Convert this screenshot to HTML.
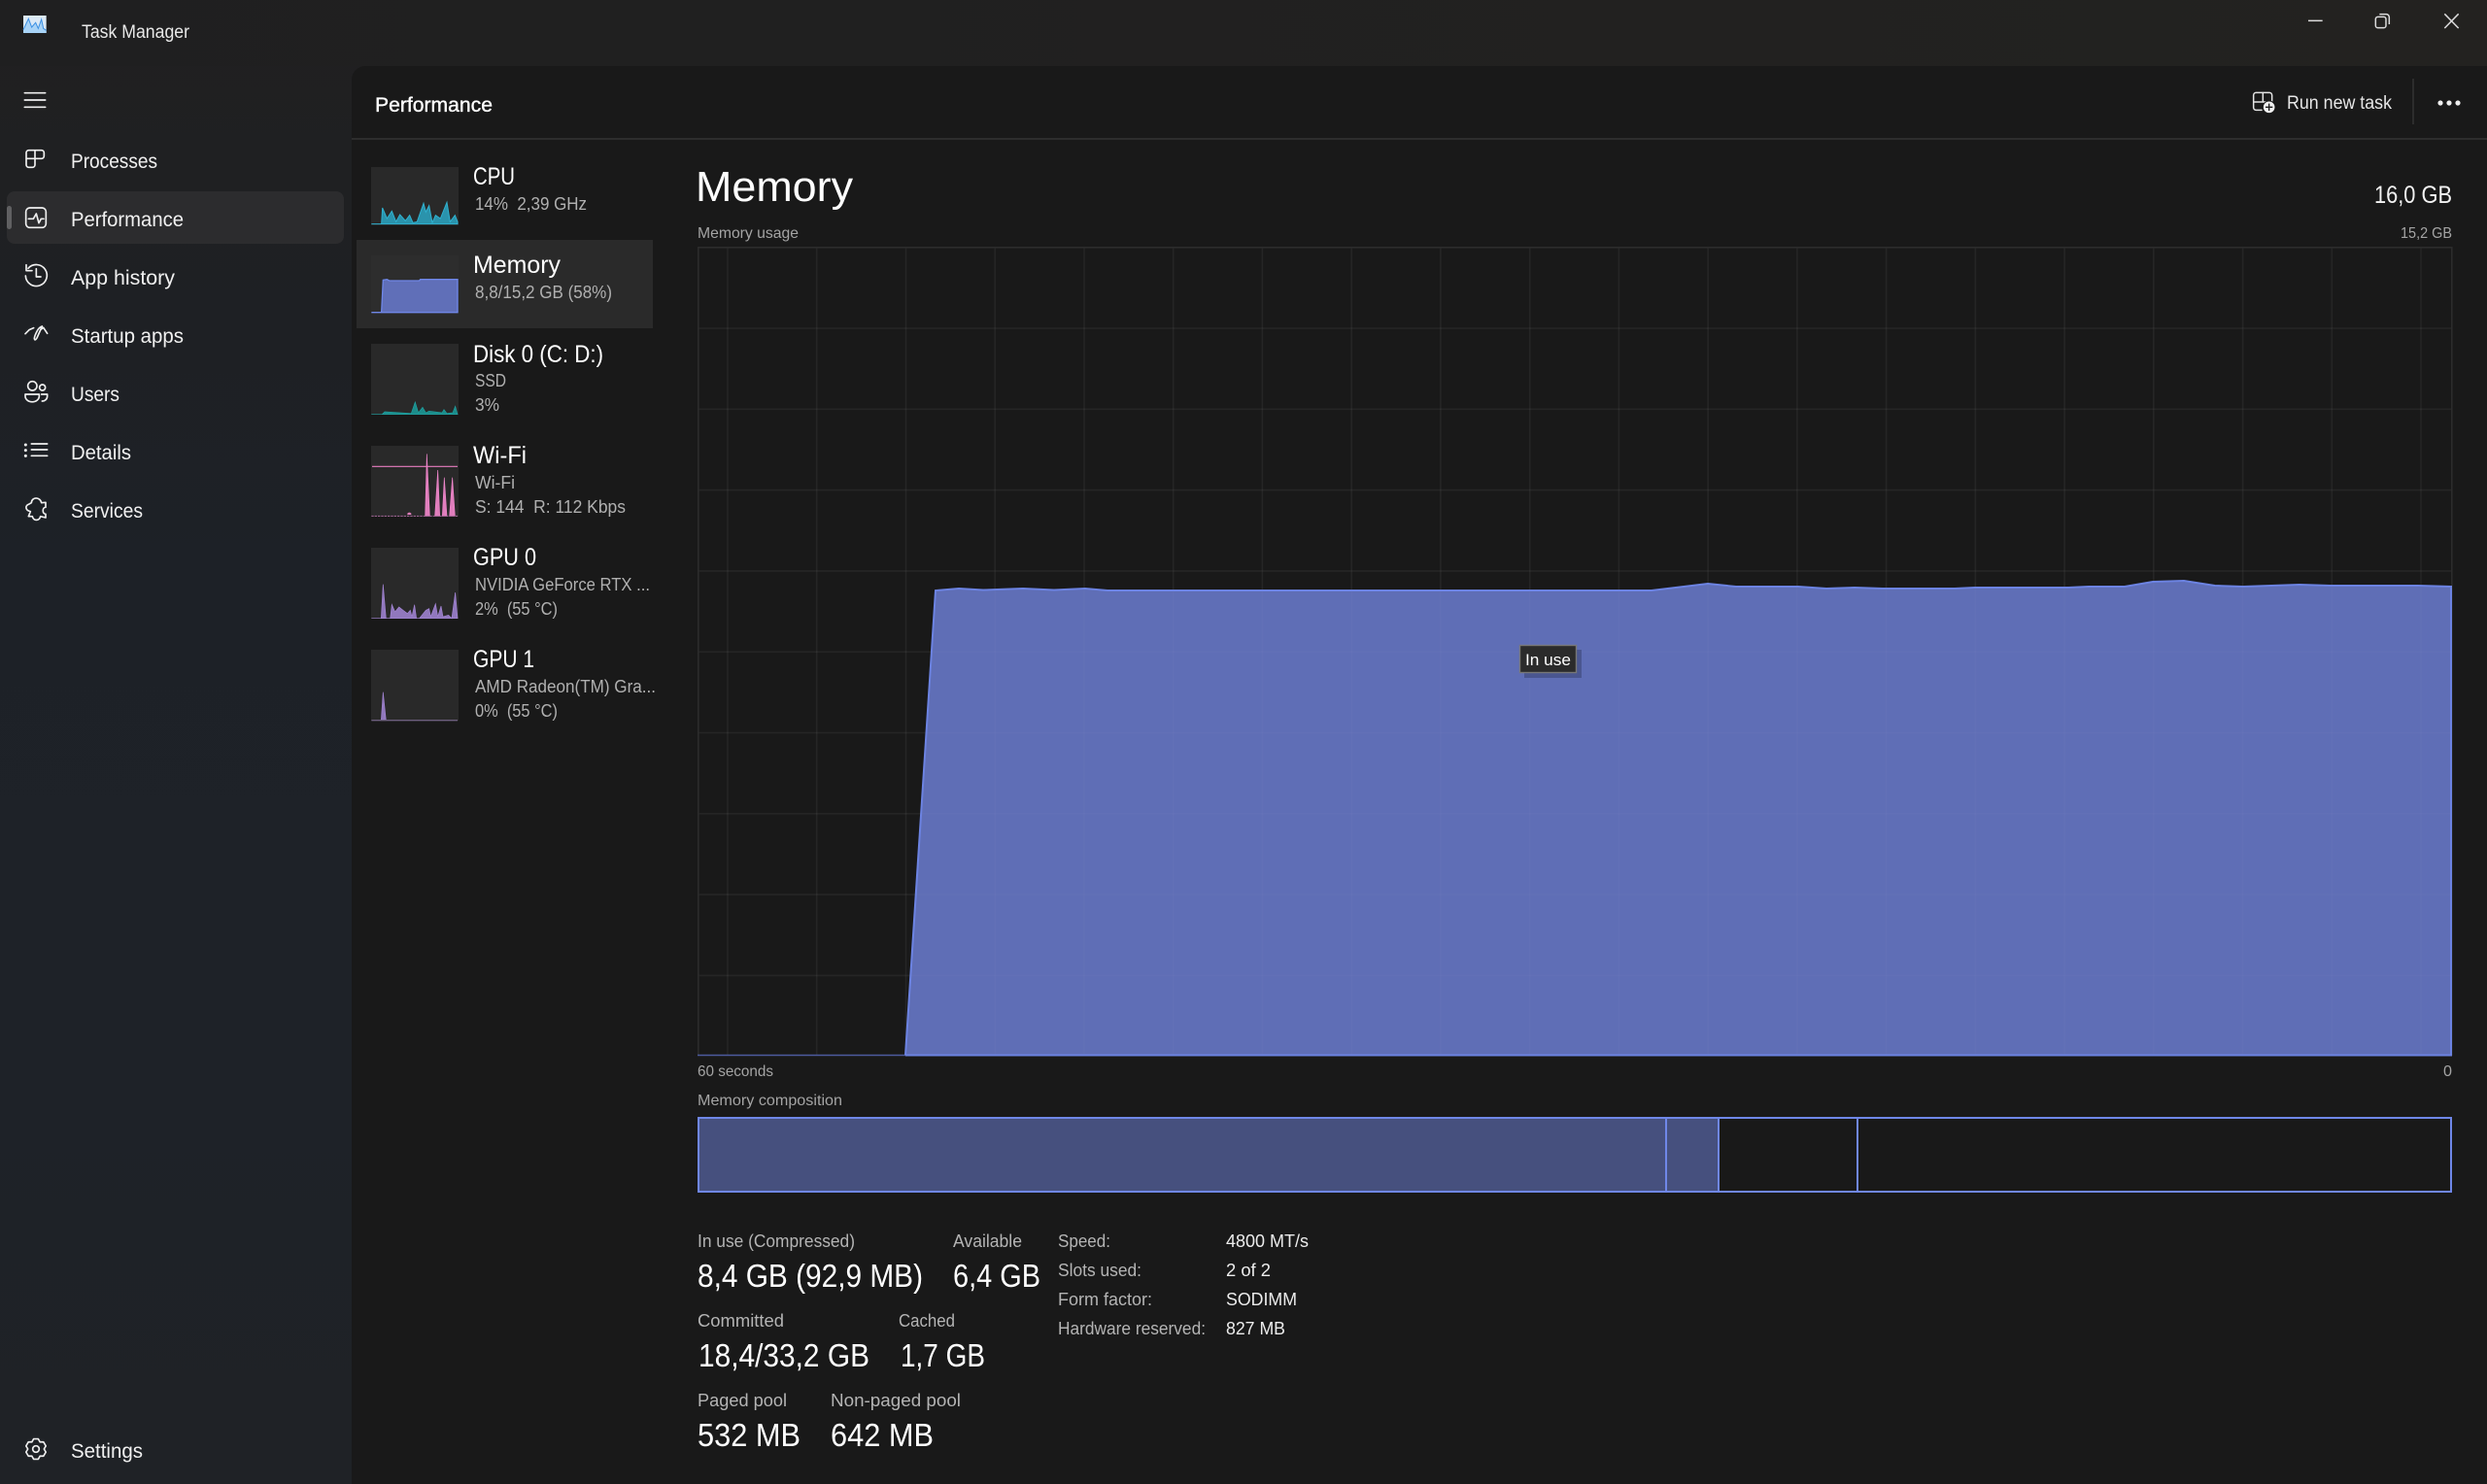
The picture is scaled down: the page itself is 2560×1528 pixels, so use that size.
<!DOCTYPE html>
<html lang="en"><head><meta charset="utf-8"><title>Task Manager</title>
<style>
html,body{margin:0;padding:0;background:#191919;width:2560px;height:1528px;overflow:hidden}
svg{display:block}
text{font-family:"Liberation Sans",sans-serif;white-space:pre}
.nav{font-size:21px;fill:#f0f0f0}
.title{font-size:25px;fill:#fff}
.sub{font-size:18px;fill:#b0b0b0}
.lab{font-size:18px;fill:#b4b4b4}
.val{font-size:33px;fill:#fff}
.sm{font-size:16px;fill:#a4a4a4}
.rv{font-size:18px;fill:#ececec}
.ic{fill:none;stroke:#efefef;stroke-width:5;stroke-linecap:round;stroke-linejoin:round}
</style></head>
<body>
<svg xmlns="http://www.w3.org/2000/svg" width="2560" height="1528" viewBox="0 0 2560 1528">
<defs>
<linearGradient id="side" x1="0" y1="0" x2="0" y2="1">
<stop offset="0" stop-color="#201f20"/><stop offset=".12" stop-color="#1f2022"/><stop offset=".38" stop-color="#1d2127"/><stop offset=".7" stop-color="#1e2228"/><stop offset="1" stop-color="#1f2226"/>
</linearGradient>
<linearGradient id="tb" x1="0" y1="0" x2="1" y2="0">
<stop offset="0" stop-color="#1f1f20"/><stop offset="1" stop-color="#232220"/>
</linearGradient>
</defs>

<rect width="2560" height="1528" fill="url(#side)"/>
<rect width="2560" height="68" fill="url(#tb)"/>
<rect x="362" y="68" width="2240" height="1500" rx="14" fill="#191919"/>
<rect x="362" y="142" width="2198" height="2" fill="#2d2d2d"/>

<!-- Title bar -->
<g transform="scale(.33333)">
<rect x="72" y="48" width="71" height="54" fill="#dbe9f6"/>
<path d="M72 92 L88 58 L98 84 L110 70 L118 88 L128 60 L134 88 L143 94 V102 H72Z" fill="#a8d3f7"/>
<path d="M72 92 L88 58 L98 84 L110 70 L118 88 L128 60 L134 88 L143 94" fill="none" stroke="#3a90e4" stroke-width="3"/>
</g>
<text x="84" y="39" font-size="19" fill="#e8e8e8" textLength="111" lengthAdjust="spacingAndGlyphs">Task Manager</text>

<g transform="translate(2260,0) scale(.33333)" fill="none" stroke="#dcdcdc" stroke-width="4.5">
<path d="M348 64 H392"/>
<rect x="556" y="52" width="32" height="34" rx="7"/>
<path d="M568 44 H589 a9 9 0 0 1 9 9 V75"/>
<path d="M769 43 L812 87 M812 43 L769 87"/>
</g>

<!-- Sidebar -->
<rect x="7" y="197" width="347" height="54" rx="8" fill="#2c2c2e"/>
<rect x="7" y="212" width="5" height="24" rx="2.5" fill="#606062"/>

<g transform="scale(.33333)">
<path class="ic" d="M76 287 H140 M76 309 H140 M76 331 H140"/>
<path class="ic" d="M108 490 V464 H128 a8 8 0 0 1 8 8 V482 a8 8 0 0 1 -8 8 H81 V472 a8 8 0 0 1 8-8 H108 M81 490 V509 a8 8 0 0 0 8 8 H100 a8 8 0 0 0 8-8 V490"/>
<rect class="ic" x="80" y="642" width="62" height="61" rx="12"/>
<path class="ic" d="M88 676 H103 L112 660 L120 689 L127 676 H135"/>
<path class="ic" d="M87 829 A33 33 0 1 1 79 852 M81 818 V836 H99 M112 830 V855 H126"/>
</g>
<g transform="translate(0,280) scale(.33333)">
<path class="ic" d="M78 191 L90 179 L104 173 M130 168 L114 204 Q108 214 106 206 Q106 198 116 180 Q122 170 130 168 M134 172 L146 190 M134 172 L126 178"/>
<circle class="ic" cx="100" cy="352" r="14"/>
<circle class="ic" cx="131" cy="357" r="9"/>
<path class="ic" d="M78 378 H121 V384 a21 17 0 0 1 -43 0 Z M128 378 H146 V384 a15 15 0 0 1 -16 15"/>
<path class="ic" d="M97 531 H146 M97 549 H146 M97 568 H146"/>
<path d="M79 534 h.1 M79 551 h.1 M79 568 h.1" stroke="#efefef" stroke-width="9" stroke-linecap="round" fill="none"/>
<path class="ic" d="M97 713 C98 694 124 694 128 713 L141 712 V727 C130 727 130 747 141 748 V759 L125 755 C121 770 103 770 100 755 L88 755 L94 740 C78 736 76 722 90 717 Z"/>
</g>
<g transform="translate(37,1492) scale(.33333)">
<path class="ic" d="M-7.2 -31.2 L7.2 -31.2 L12.5 -21.7 L23.4 -21.8 L30.6 -9.4 L25 0 L30.6 9.4 L23.4 21.8 L12.5 21.7 L7.2 31.2 L-7.2 31.2 L-12.5 21.7 L-23.4 21.8 L-30.6 9.4 L-25 0 L-30.6 -9.4 L-23.4 -21.8 L-12.5 -21.7Z"/>
<circle class="ic" cx="0" cy="0" r="10"/>
</g>

<text class="nav" x="73" y="173" textLength="89" lengthAdjust="spacingAndGlyphs">Processes</text>
<text class="nav" x="73" y="233" textLength="116" lengthAdjust="spacingAndGlyphs">Performance</text>
<text class="nav" x="73" y="293" textLength="107" lengthAdjust="spacingAndGlyphs">App history</text>
<text class="nav" x="73" y="353" textLength="116" lengthAdjust="spacingAndGlyphs">Startup apps</text>
<text class="nav" x="73" y="413" textLength="50" lengthAdjust="spacingAndGlyphs">Users</text>
<text class="nav" x="73" y="473" textLength="62" lengthAdjust="spacingAndGlyphs">Details</text>
<text class="nav" x="73" y="533" textLength="74" lengthAdjust="spacingAndGlyphs">Services</text>
<text class="nav" x="73" y="1501" textLength="74" lengthAdjust="spacingAndGlyphs">Settings</text>

<!-- Header -->
<text x="386" y="115" font-size="21" fill="#fff" stroke="#fff" stroke-width=".35" textLength="121" lengthAdjust="spacingAndGlyphs">Performance</text>
<g transform="translate(2260,0) scale(.33333)" fill="none" stroke="#e4e4e4" stroke-width="4.5" stroke-linejoin="round">
<path d="M208 315 V286 H228 a8 8 0 0 1 8 8 V315 H179 V294 a8 8 0 0 1 8-8 H208 M179 315 V332 a8 8 0 0 0 8 8 H206"/>
<circle cx="227" cy="331" r="19" fill="#f2f2f2" stroke="#191919" stroke-width="3"/>
<path d="M216 331 H238 M227 320 V342" stroke="#191919" stroke-width="4"/>
</g>
<text x="2354" y="112" font-size="19" fill="#e6e6e6" textLength="108" lengthAdjust="spacingAndGlyphs">Run new task</text>
<rect x="2483" y="81" width="2" height="47" fill="#2d2d2d"/>
<circle cx="2512" cy="106" r="2.6" fill="#eee"/><circle cx="2521" cy="106" r="2.6" fill="#eee"/><circle cx="2530" cy="106" r="2.6" fill="#eee"/>

<!-- Left list -->
<rect x="367" y="247" width="305" height="91" fill="#2a2a2a"/>
<rect x="382" y="172" width="90" height="60" fill="#292929"/>
<rect x="382" y="263" width="90" height="60" fill="#2d2d2d"/>
<rect x="382" y="354" width="90" height="73" fill="#292929"/>
<rect x="382" y="459" width="90" height="73" fill="#292929"/>
<rect x="382" y="564" width="90" height="73" fill="#292929"/>
<rect x="382" y="669" width="90" height="73" fill="#292929"/>

<g transform="translate(360,140) scale(.33333)">
<path d="M67 272 H98 L101 222 L115 255 L130 232 L143 265 L155 243 L172 262 L185 245 L195 268 L208 265 L228 208 L235 235 L245 215 L255 268 L265 245 L280 255 L300 205 L310 265 L325 245 L333 265 V272Z" fill="#2a93ac" stroke="#2fb1cf" stroke-width="3"/>
<path d="M67 545 H98 L103 445 L115 443 L122 447 H215 L218 443 H333 V545Z" fill="#606fb8" stroke="#6f87e8" stroke-width="4"/>
<path d="M67 860 H100 L108 852 L190 857 L202 822 L212 855 L225 838 L235 855 L245 850 L285 855 L291 845 L300 857 L318 855 L326 835 L333 860Z" fill="#1c8c8a" stroke="#1fa3a3" stroke-width="2"/>
</g>
<g transform="translate(360,440) scale(.33333)">
<path d="M69 121 H333" stroke="#e87cc0" stroke-width="3.5" fill="none"/>
<path d="M233 274 L238 82 L247 274Z M263 274 L272 132 L278 274Z M286 274 L292 155 L300 274Z M308 274 L317 155 L325 274Z" fill="#e07ebc" stroke="#ee86cb" stroke-width="2"/>
<path d="M178 266 Q184 260 190 266 V270 H178Z" fill="#e07ebc"/>
<path d="M67 274 H333" stroke="#a5679a" stroke-width="3" stroke-dasharray="7 3" fill="none"/>
<path d="M67 590 H97 L103 485 L112 590 H125 L130 547 L140 570 L152 555 L165 565 L178 575 L187 565 L192 585 L200 548 L206 590 H215 L235 565 L245 560 L250 585 L265 545 L272 585 L282 552 L288 585 L305 580 L315 590 L326 510 L333 590Z" fill="#9178bd" stroke="#a485d5" stroke-width="2"/>
<path d="M97 905 L103 818 L112 905Z" fill="#9178bd" stroke="#a485d5" stroke-width="2"/>
<path d="M67 905 H333" stroke="#6c5f7e" stroke-width="4" fill="none"/>
</g>

<text class="title" x="487" y="190" textLength="43" lengthAdjust="spacingAndGlyphs">CPU</text>
<text class="sub" x="489" y="216" textLength="115" lengthAdjust="spacingAndGlyphs">14%  2,39 GHz</text>
<text class="title" x="487" y="281" textLength="90" lengthAdjust="spacingAndGlyphs">Memory</text>
<text class="sub" x="489" y="307" textLength="141" lengthAdjust="spacingAndGlyphs">8,8/15,2 GB (58%)</text>
<text class="title" x="487" y="373" textLength="134" lengthAdjust="spacingAndGlyphs">Disk 0 (C: D:)</text>
<text class="sub" x="489" y="398" textLength="32" lengthAdjust="spacingAndGlyphs">SSD</text>
<text class="sub" x="489" y="423" textLength="25" lengthAdjust="spacingAndGlyphs">3%</text>
<text class="title" x="487" y="477" textLength="55" lengthAdjust="spacingAndGlyphs">Wi-Fi</text>
<text class="sub" x="489" y="503" textLength="41" lengthAdjust="spacingAndGlyphs">Wi-Fi</text>
<text class="sub" x="489" y="528" textLength="155" lengthAdjust="spacingAndGlyphs">S: 144  R: 112 Kbps</text>
<text class="title" x="487" y="582" textLength="65" lengthAdjust="spacingAndGlyphs">GPU 0</text>
<text class="sub" x="489" y="608" textLength="180" lengthAdjust="spacingAndGlyphs">NVIDIA GeForce RTX ...</text>
<text class="sub" x="489" y="633" textLength="85" lengthAdjust="spacingAndGlyphs">2%  (55 °C)</text>
<text class="title" x="487" y="687" textLength="63" lengthAdjust="spacingAndGlyphs">GPU 1</text>
<text class="sub" x="489" y="713" textLength="186" lengthAdjust="spacingAndGlyphs">AMD Radeon(TM) Gra...</text>
<text class="sub" x="489" y="738" textLength="85" lengthAdjust="spacingAndGlyphs">0%  (55 °C)</text>

<!-- Main heading -->
<text x="716" y="207" font-size="44" fill="#fff" textLength="162" lengthAdjust="spacingAndGlyphs">Memory</text>
<text class="sm" x="718" y="245" textLength="104" lengthAdjust="spacingAndGlyphs">Memory usage</text>
<text x="2444" y="209" font-size="25" fill="#f2f2f2" textLength="80" lengthAdjust="spacingAndGlyphs">16,0 GB</text>
<text class="sm" x="2471" y="245" textLength="53" lengthAdjust="spacingAndGlyphs">15,2 GB</text>

<!-- Chart grid on dark -->
<g stroke="#fff" stroke-opacity=".055" stroke-width="1.6" fill="none">
<path d="M749 254V1087M840.7 254V1087M932.5 254V1087M1024.2 254V1087M1116 254V1087M1207.7 254V1087M1299.4 254V1087M1391.2 254V1087M1482.9 254V1087M1574.7 254V1087M1666.4 254V1087M1758.1 254V1087M1849.9 254V1087M1941.6 254V1087M2033.4 254V1087M2125.1 254V1087M2216.8 254V1087M2308.6 254V1087M2400.3 254V1087M2492 254V1087"/>
<path d="M718 338H2524M718 421.3H2524M718 504.6H2524M718 587.9H2524M718 671.2H2524M718 754.5H2524M718 837.8H2524M718 921.1H2524M718 1004.4H2524"/>
</g>
<path d="M718.8 1087V254.8H2523.8V1087" fill="none" stroke="#2c2c2c" stroke-width="1.6"/>

<!-- Area -->
<path d="M932 1087 L963 608 L987 606 L1012 607.5 L1053 606 L1085 607.5 L1117 606 L1140 608 L1700 608 L1758 601 L1787 604 L1851 604 L1880 606 L1909 605 L1938 606 L2012 606 L2033 605 L2129 605 L2150 604 L2187 604 L2216 599 L2248 598 L2280 603 L2309 604 L2367 602 L2399 603 L2489 603 L2523 604 V1087Z" fill="#5f6eb6"/>
<clipPath id="ac"><path d="M932 1087 L963 608 L1700 608 L1758 601 L2248 598 L2523 604 V1087Z"/></clipPath>
<g clip-path="url(#ac)" stroke="#fff" stroke-opacity=".02" stroke-width="1.6" fill="none">
<path d="M1024.2 254V1087M1116 254V1087M1207.7 254V1087M1299.4 254V1087M1391.2 254V1087M1482.9 254V1087M1574.7 254V1087M1666.4 254V1087M1758.1 254V1087M1849.9 254V1087M1941.6 254V1087M2033.4 254V1087M2125.1 254V1087M2216.8 254V1087M2308.6 254V1087M2400.3 254V1087M2492 254V1087"/>
<path d="M718 671.2H2524M718 754.5H2524M718 837.8H2524M718 921.1H2524M718 1004.4H2524"/>
</g>
<path d="M718 1086.5 H932" fill="none" stroke="#4d5a9e" stroke-width="1.6"/>
<path d="M932 1086.5 L963 608 L987 606 L1012 607.5 L1053 606 L1085 607.5 L1117 606 L1140 608 L1700 608 L1758 601 L1787 604 L1851 604 L1880 606 L1909 605 L1938 606 L2012 606 L2033 605 L2129 605 L2150 604 L2187 604 L2216 599 L2248 598 L2280 603 L2309 604 L2367 602 L2399 603 L2489 603 L2523 604 V1086.5 H932" fill="none" stroke="#6c83e2" stroke-width="2"/>

<!-- Tooltip -->
<rect x="1569" y="669" width="59" height="29" fill="#4a5690"/>
<rect x="1564.5" y="664.5" width="58" height="28" fill="#2b2b2b" stroke="#777" stroke-width="1.4"/>
<text x="1570" y="685" font-size="17" fill="#fff" textLength="47" lengthAdjust="spacingAndGlyphs">In use</text>

<text class="sm" x="718" y="1108" textLength="78" lengthAdjust="spacingAndGlyphs">60 seconds</text>
<text class="sm" x="2515" y="1108" textLength="9" lengthAdjust="spacingAndGlyphs">0</text>
<text class="sm" x="718" y="1138" textLength="149" lengthAdjust="spacingAndGlyphs">Memory composition</text>

<!-- Composition bar -->
<rect x="719" y="1151" width="1050" height="76" fill="#46507e"/>
<rect x="719" y="1151" width="1804" height="76" fill="none" stroke="#6f87e8" stroke-width="2"/>
<path d="M1715 1150V1228M1769 1150V1228M1912 1150V1228" stroke="#6f87e8" stroke-width="2" fill="none"/>

<!-- Stats -->
<text class="lab" x="718" y="1284" textLength="162" lengthAdjust="spacingAndGlyphs">In use (Compressed)</text>
<text class="val" x="718" y="1325" textLength="232" lengthAdjust="spacingAndGlyphs">8,4 GB (92,9 MB)</text>
<text class="lab" x="981" y="1284" textLength="71" lengthAdjust="spacingAndGlyphs">Available</text>
<text class="val" x="981" y="1325" textLength="90" lengthAdjust="spacingAndGlyphs">6,4 GB</text>
<text class="lab" x="718" y="1366" textLength="89" lengthAdjust="spacingAndGlyphs">Committed</text>
<text class="val" x="719" y="1407" textLength="176" lengthAdjust="spacingAndGlyphs">18,4/33,2 GB</text>
<text class="lab" x="925" y="1366" textLength="58" lengthAdjust="spacingAndGlyphs">Cached</text>
<text class="val" x="927" y="1407" textLength="87" lengthAdjust="spacingAndGlyphs">1,7 GB</text>
<text class="lab" x="718" y="1448" textLength="92" lengthAdjust="spacingAndGlyphs">Paged pool</text>
<text class="val" x="718" y="1489" textLength="106" lengthAdjust="spacingAndGlyphs">532 MB</text>
<text class="lab" x="855" y="1448" textLength="134" lengthAdjust="spacingAndGlyphs">Non-paged pool</text>
<text class="val" x="855" y="1489" textLength="106" lengthAdjust="spacingAndGlyphs">642 MB</text>

<text class="lab" x="1089" y="1284" textLength="54" lengthAdjust="spacingAndGlyphs">Speed:</text>
<text class="lab" x="1089" y="1314" textLength="86" lengthAdjust="spacingAndGlyphs">Slots used:</text>
<text class="lab" x="1089" y="1344" textLength="97" lengthAdjust="spacingAndGlyphs">Form factor:</text>
<text class="lab" x="1089" y="1374" textLength="152" lengthAdjust="spacingAndGlyphs">Hardware reserved:</text>
<text class="rv" x="1262" y="1284" textLength="85" lengthAdjust="spacingAndGlyphs">4800 MT/s</text>
<text class="rv" x="1262" y="1314" textLength="46" lengthAdjust="spacingAndGlyphs">2 of 2</text>
<text class="rv" x="1262" y="1344" textLength="73" lengthAdjust="spacingAndGlyphs">SODIMM</text>
<text class="rv" x="1262" y="1374" textLength="61" lengthAdjust="spacingAndGlyphs">827 MB</text>
</svg>
</body></html>
